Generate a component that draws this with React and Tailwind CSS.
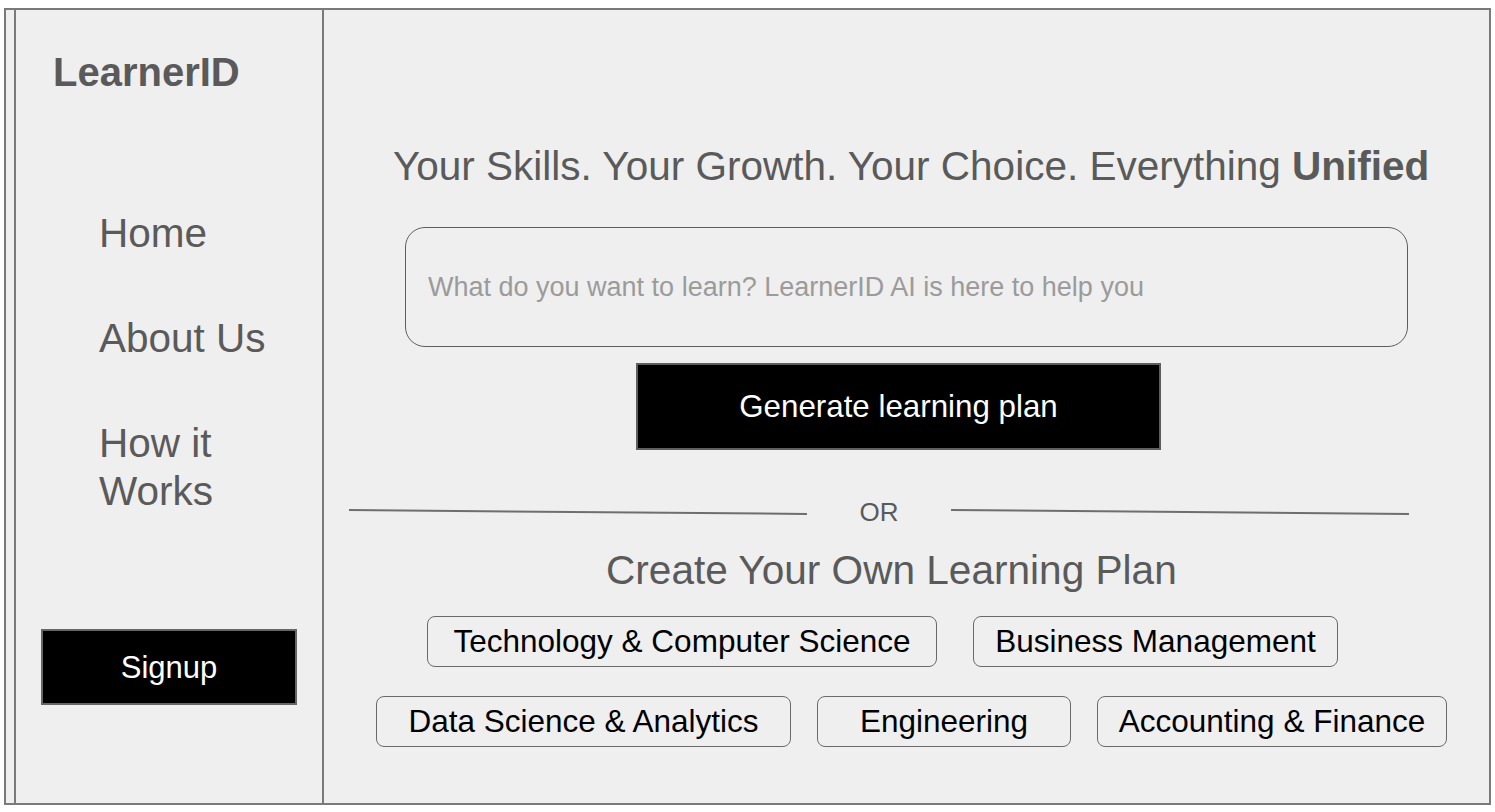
const NAV = ['Home', 'About Us', 'How it Works'];

const ROW_ONE = [
  { label: 'Technology & Computer Science', width: 'w-[510px]' },
  { label: 'Business Management', width: 'w-[365px]' },
];

const ROW_TWO = [
  { label: 'Data Science & Analytics', width: 'w-[415px]' },
  { label: 'Engineering', width: 'w-[254px]' },
  { label: 'Accounting & Finance', width: 'w-[350px]' },
];

const Chip = ({ label, width }) => (
  <button
    className={`${width} h-[51px] shrink-0 rounded-[8px] border-[1.5px] border-[#6a6a6a] bg-transparent text-[31.5px] leading-none text-black`}
  >
    {label}
  </button>
);

const Sidebar = () => (
  <aside className="w-[310px] shrink-0 h-full border-x-2 border-[#7a7a7a] flex flex-col">
    <div className="pt-[38px] pl-[37px] text-[40px] leading-[48px] font-bold text-[#5a5a5a]">
      LearnerID
    </div>

    <nav className="mt-[113px] pl-[83px] w-[270px] flex flex-col gap-[57px]">
      {NAV.map((item) => (
        <a
          key={item}
          href="#"
          className="w-[180px] text-[40.5px] leading-[48px] text-[#5a5a5a]"
        >
          {item}
        </a>
      ))}
    </nav>

    <button className="mt-[114px] ml-[25px] w-[256px] h-[76px] bg-black border-2 border-[#666] text-white text-[31px] leading-none">
      Signup
    </button>
  </aside>
);

export default function App() {
  return (
    <div
      className="w-[1495px] h-[812px] bg-white pt-[8px] pl-[4px]"
      style={{ fontFamily: '"Liberation Sans", Arial, sans-serif' }}
    >
      <div className="w-[1487px] h-[797px] border-2 border-[#7a7a7a] bg-[#efefef] flex">
        <div className="w-[8px] shrink-0" />
        <Sidebar />

        <main className="flex-1 flex flex-col items-start pt-[132px]">
          <h1 className="ml-[69px] text-[40.5px] leading-[48px] font-normal text-[#5a5a5a] whitespace-nowrap">
            Your Skills. Your Growth. Your Choice. Everything{' '}
            <span className="font-bold">Unified</span>
          </h1>

          <input
            type="text"
            placeholder="What do you want to learn? LearnerID AI is here to help you"
            className="mt-[37px] ml-[81px] w-[1003px] h-[120px] rounded-[20px] border-[1.5px] border-[#5e5e5e] bg-transparent pl-[22px] text-[27px] text-[#333] placeholder:text-[#9b9b9b] outline-none"
            style={{ fontFamily: '"Liberation Sans", Arial, sans-serif' }}
          />

          <button className="mt-[16px] ml-[312px] w-[525px] h-[87px] bg-black border-2 border-[#5e5e5e] text-white text-[31.3px] leading-none">
            Generate learning plan
          </button>

          <div className="mt-[47px] ml-[25px] flex items-center h-[30px]">
            <div className="w-[458px] h-[2px] bg-[#6e6e6e] rotate-[0.5deg]" />
            <span className="w-[144px] text-center text-[26px] leading-[30px] text-[#5a5a5a]">
              OR
            </span>
            <div className="w-[458px] h-[2px] bg-[#6e6e6e] rotate-[0.5deg]" />
          </div>

          <h2 className="mt-[19px] ml-[282px] text-[40.6px] leading-[48px] font-normal text-[#5a5a5a] whitespace-nowrap">
            Create Your Own Learning Plan
          </h2>

          <div className="mt-[22px] ml-[103px] flex gap-[36px]">
            {ROW_ONE.map((chip) => (
              <Chip key={chip.label} {...chip} />
            ))}
          </div>

          <div className="mt-[29px] ml-[52px] flex gap-[26px]">
            {ROW_TWO.map((chip) => (
              <Chip key={chip.label} {...chip} />
            ))}
          </div>
        </main>
      </div>
    </div>
  );
}
